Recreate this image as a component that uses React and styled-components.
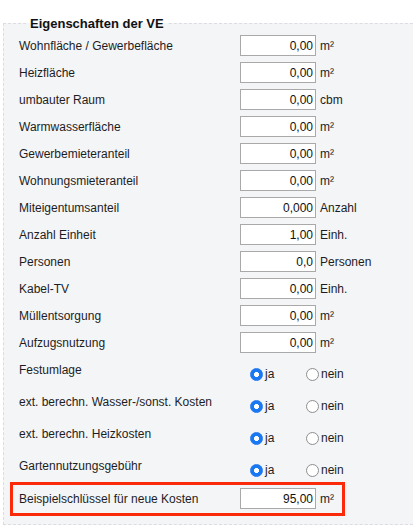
import React from 'react';
import styled, { createGlobalStyle } from 'styled-components';

const GlobalStyle = createGlobalStyle`
  html, body {
    margin: 0;
    padding: 0;
    background: #ffffff;
    overflow: hidden;
  }
  body {
    font-family: "Liberation Sans", Arial, sans-serif;
    font-size: 12px;
    color: #1d1d1f;
  }
`;

const Fieldset = styled.fieldset`
  margin: 16px -20px 0 3px;
  padding: 4px 0 8px 15px;
  border: 1px dashed #dcdde0;
  background-color: #f4f5f7;
  min-width: 0;
`;

const Legend = styled.legend`
  margin-left: 7px;
  padding: 0 4px;
  font-size: 13px;
  font-weight: bold;
  line-height: 15px;
  color: #111;
`;

const Rows = styled.div`
  display: flex;
  flex-direction: column;
  gap: 6px;
`;

const FieldRow = styled.div`
  display: grid;
  grid-template-columns: 221px 76px auto;
  align-items: center;
  height: 21px;
`;

const Label = styled.span`
  line-height: 14px;
  white-space: nowrap;
`;

const NumberInput = styled.input`
  box-sizing: border-box;
  width: 76px;
  height: 21px;
  margin: 0;
  padding: 0 2px 0 4px;
  border: 1px solid #a9a9a9;
  border-radius: 0;
  background: #fff;
  font-family: "Liberation Sans", Arial, sans-serif;
  font-size: 12px;
  color: #111;
  text-align: right;
  outline: none;
`;

const Unit = styled.span`
  padding-left: 4px;
  line-height: 14px;
  white-space: nowrap;
`;

const RadioList = styled.div`
  display: flex;
  flex-direction: column;
  gap: 12px;
  margin-top: 10px;
`;

const RadioRow = styled.div`
  display: grid;
  grid-template-columns: 221px auto;
  align-items: start;
  height: 20px;
`;

const RadioGroup = styled.div`
  display: flex;
  padding-left: 10px;
  margin-top: 4px;
`;

const RadioOption = styled.label`
  display: flex;
  align-items: center;
  width: ${props => props.$width}px;
  line-height: 14px;
`;

const Radio = styled.input`
  appearance: none;
  -webkit-appearance: none;
  box-sizing: border-box;
  width: 13px;
  height: 13px;
  margin: 0 2px 0 0;
  border: 1px solid #8e8e8e;
  border-radius: 50%;
  background: #fff;

  &:checked {
    border-color: #1a78f2;
    background: radial-gradient(circle, #fff 0 2.2px, #1a78f2 2.8px);
  }
`;

const Highlight = styled.div`
  box-sizing: border-box;
  display: grid;
  grid-template-columns: 221px 76px auto;
  align-items: center;
  width: 335px;
  margin: 3px 0 0 -9px;
  padding: 3px 0 4px 6px;
  border: 3px solid #fb2a0a;
`;

const fields = [
  { label: 'Wohnfläche / Gewerbefläche', value: '0,00', unit: 'm²' },
  { label: 'Heizfläche', value: '0,00', unit: 'm²' },
  { label: 'umbauter Raum', value: '0,00', unit: 'cbm' },
  { label: 'Warmwasserfläche', value: '0,00', unit: 'm²' },
  { label: 'Gewerbemieteranteil', value: '0,00', unit: 'm²' },
  { label: 'Wohnungsmieteranteil', value: '0,00', unit: 'm²' },
  { label: 'Miteigentumsanteil', value: '0,000', unit: 'Anzahl' },
  { label: 'Anzahl Einheit', value: '1,00', unit: 'Einh.' },
  { label: 'Personen', value: '0,0', unit: 'Personen' },
  { label: 'Kabel-TV', value: '0,00', unit: 'Einh.' },
  { label: 'Müllentsorgung', value: '0,00', unit: 'm²' },
  { label: 'Aufzugsnutzung', value: '0,00', unit: 'm²' },
];

const switches = [
  { name: 'festumlage', label: 'Festumlage' },
  { name: 'wasser', label: 'ext. berechn. Wasser-/sonst. Kosten' },
  { name: 'heizkosten', label: 'ext. berechn. Heizkosten' },
  { name: 'garten', label: 'Gartennutzungsgebühr' },
];

const App = () => {
  return (
    <>
      <GlobalStyle />
      <Fieldset>
        <Legend>Eigenschaften der VE</Legend>
        <Rows>
          {fields.map(field => (
            <FieldRow key={field.label}>
              <Label>{field.label}</Label>
              <NumberInput type="text" defaultValue={field.value} />
              <Unit>{field.unit}</Unit>
            </FieldRow>
          ))}
        </Rows>
        <RadioList>
          {switches.map(item => (
            <RadioRow key={item.name}>
              <Label>{item.label}</Label>
              <RadioGroup>
                <RadioOption $width={56}>
                  <Radio type="radio" name={item.name} defaultChecked />
                  ja
                </RadioOption>
                <RadioOption $width={50}>
                  <Radio type="radio" name={item.name} />
                  nein
                </RadioOption>
              </RadioGroup>
            </RadioRow>
          ))}
        </RadioList>
        <Highlight>
          <Label>Beispielschlüssel für neue Kosten</Label>
          <NumberInput type="text" defaultValue="95,00" />
          <Unit>m²</Unit>
        </Highlight>
      </Fieldset>
    </>
  );
};

export default App;
